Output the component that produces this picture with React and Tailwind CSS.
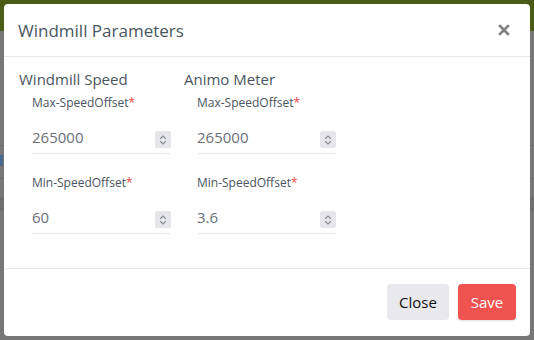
import React from "react";

const font = { fontFamily: '"Open Sans", "Noto Sans", sans-serif' };

function Spinner() {
  return (
    <div className="mt-[4px] w-[16px] h-[17px] bg-[#e6e6ea] rounded-[2px] flex items-center justify-center">
      <svg width="8" height="12" viewBox="0 0 8 12" fill="none" stroke="#8a8f98" strokeWidth="1.1" strokeLinecap="round" strokeLinejoin="round">
        <path d="M1.5 4.5 L4 2 L6.5 4.5" />
        <path d="M1.5 7.5 L4 10 L6.5 7.5" />
      </svg>
    </div>
  );
}

function Field({ label, value }) {
  return (
    <div className="flex flex-col w-[139px]">
      <div className="text-[12px] leading-[16px] text-[#4a5560]">
        {label}
        <span className="text-[#ef4444]">*</span>
      </div>
      <div className="mt-[16px] flex items-start justify-between h-[27px] border-b border-[#e5e7eb]">
        <span className="text-[15px] text-[#6b6f78] leading-[20px]">{value}</span>
        <Spinner />
      </div>
    </div>
  );
}

function Column({ title, max, min }) {
  return (
    <div className="flex flex-col w-[165px]">
      <div className="text-[15px] leading-[20px] text-[#4a5560]">{title}</div>
      <div className="pl-[13px] mt-[6px] flex flex-col">
        <Field label="Max-SpeedOffset" value={max} />
        <div className="mt-[21px]">
          <Field label="Min-SpeedOffset" value={min} />
        </div>
      </div>
    </div>
  );
}

export default function App() {
  return (
    <div className="relative w-[534px] h-[340px] bg-[#777777] overflow-hidden" style={font}>
      <div className="h-[31px] bg-[#4b5c16]" />
      <div className="h-[114px]" />
      <div className="h-[1px] bg-[#6a6a6a]" />
      <div className="h-[9px]" />
      <div className="h-[11px] w-[3px] bg-[#4a6a90]" />
      <div className="h-[12px]" />
      <div className="h-[1px] bg-[#6a6a6a]" />
      <div className="h-[18px]" />
      <div className="h-[14px] bg-[#707070]" />
      <div className="absolute left-[4px] top-[4px] w-[526px] h-[332px] bg-white rounded-[4px] flex flex-col">
        <div className="h-[53px] border-b border-[#e9e9e9] flex items-center justify-between pl-[14px] pr-[20px]">
          <span className="text-[17px] text-[#4a5663] pt-[1px]">Windmill Parameters</span>
          <svg width="12" height="12" viewBox="0 0 12 12">
            <path d="M2 2 L10 10 M10 2 L2 10" stroke="#808080" strokeWidth="2.6" strokeLinecap="square" />
          </svg>
        </div>
        <div className="h-[212px] border-b border-[#e9e9e9] pl-[15px] pt-[12px] flex">
          <Column title="Windmill Speed" max="265000" min="60" />
          <Column title="Animo Meter" max="265000" min="3.6" />
        </div>
        <div className="flex-1 flex items-center justify-end gap-[9px] pr-[14px] pb-[1px]">
          <button className="h-[36px] w-[62px] rounded-[4px] bg-[#e8e8ed] text-[15px] text-[#111]">Close</button>
          <button className="h-[36px] w-[58px] rounded-[4px] bg-[#ef5350] text-[15px] text-white shadow-sm">Save</button>
        </div>
      </div>
    </div>
  );
}
